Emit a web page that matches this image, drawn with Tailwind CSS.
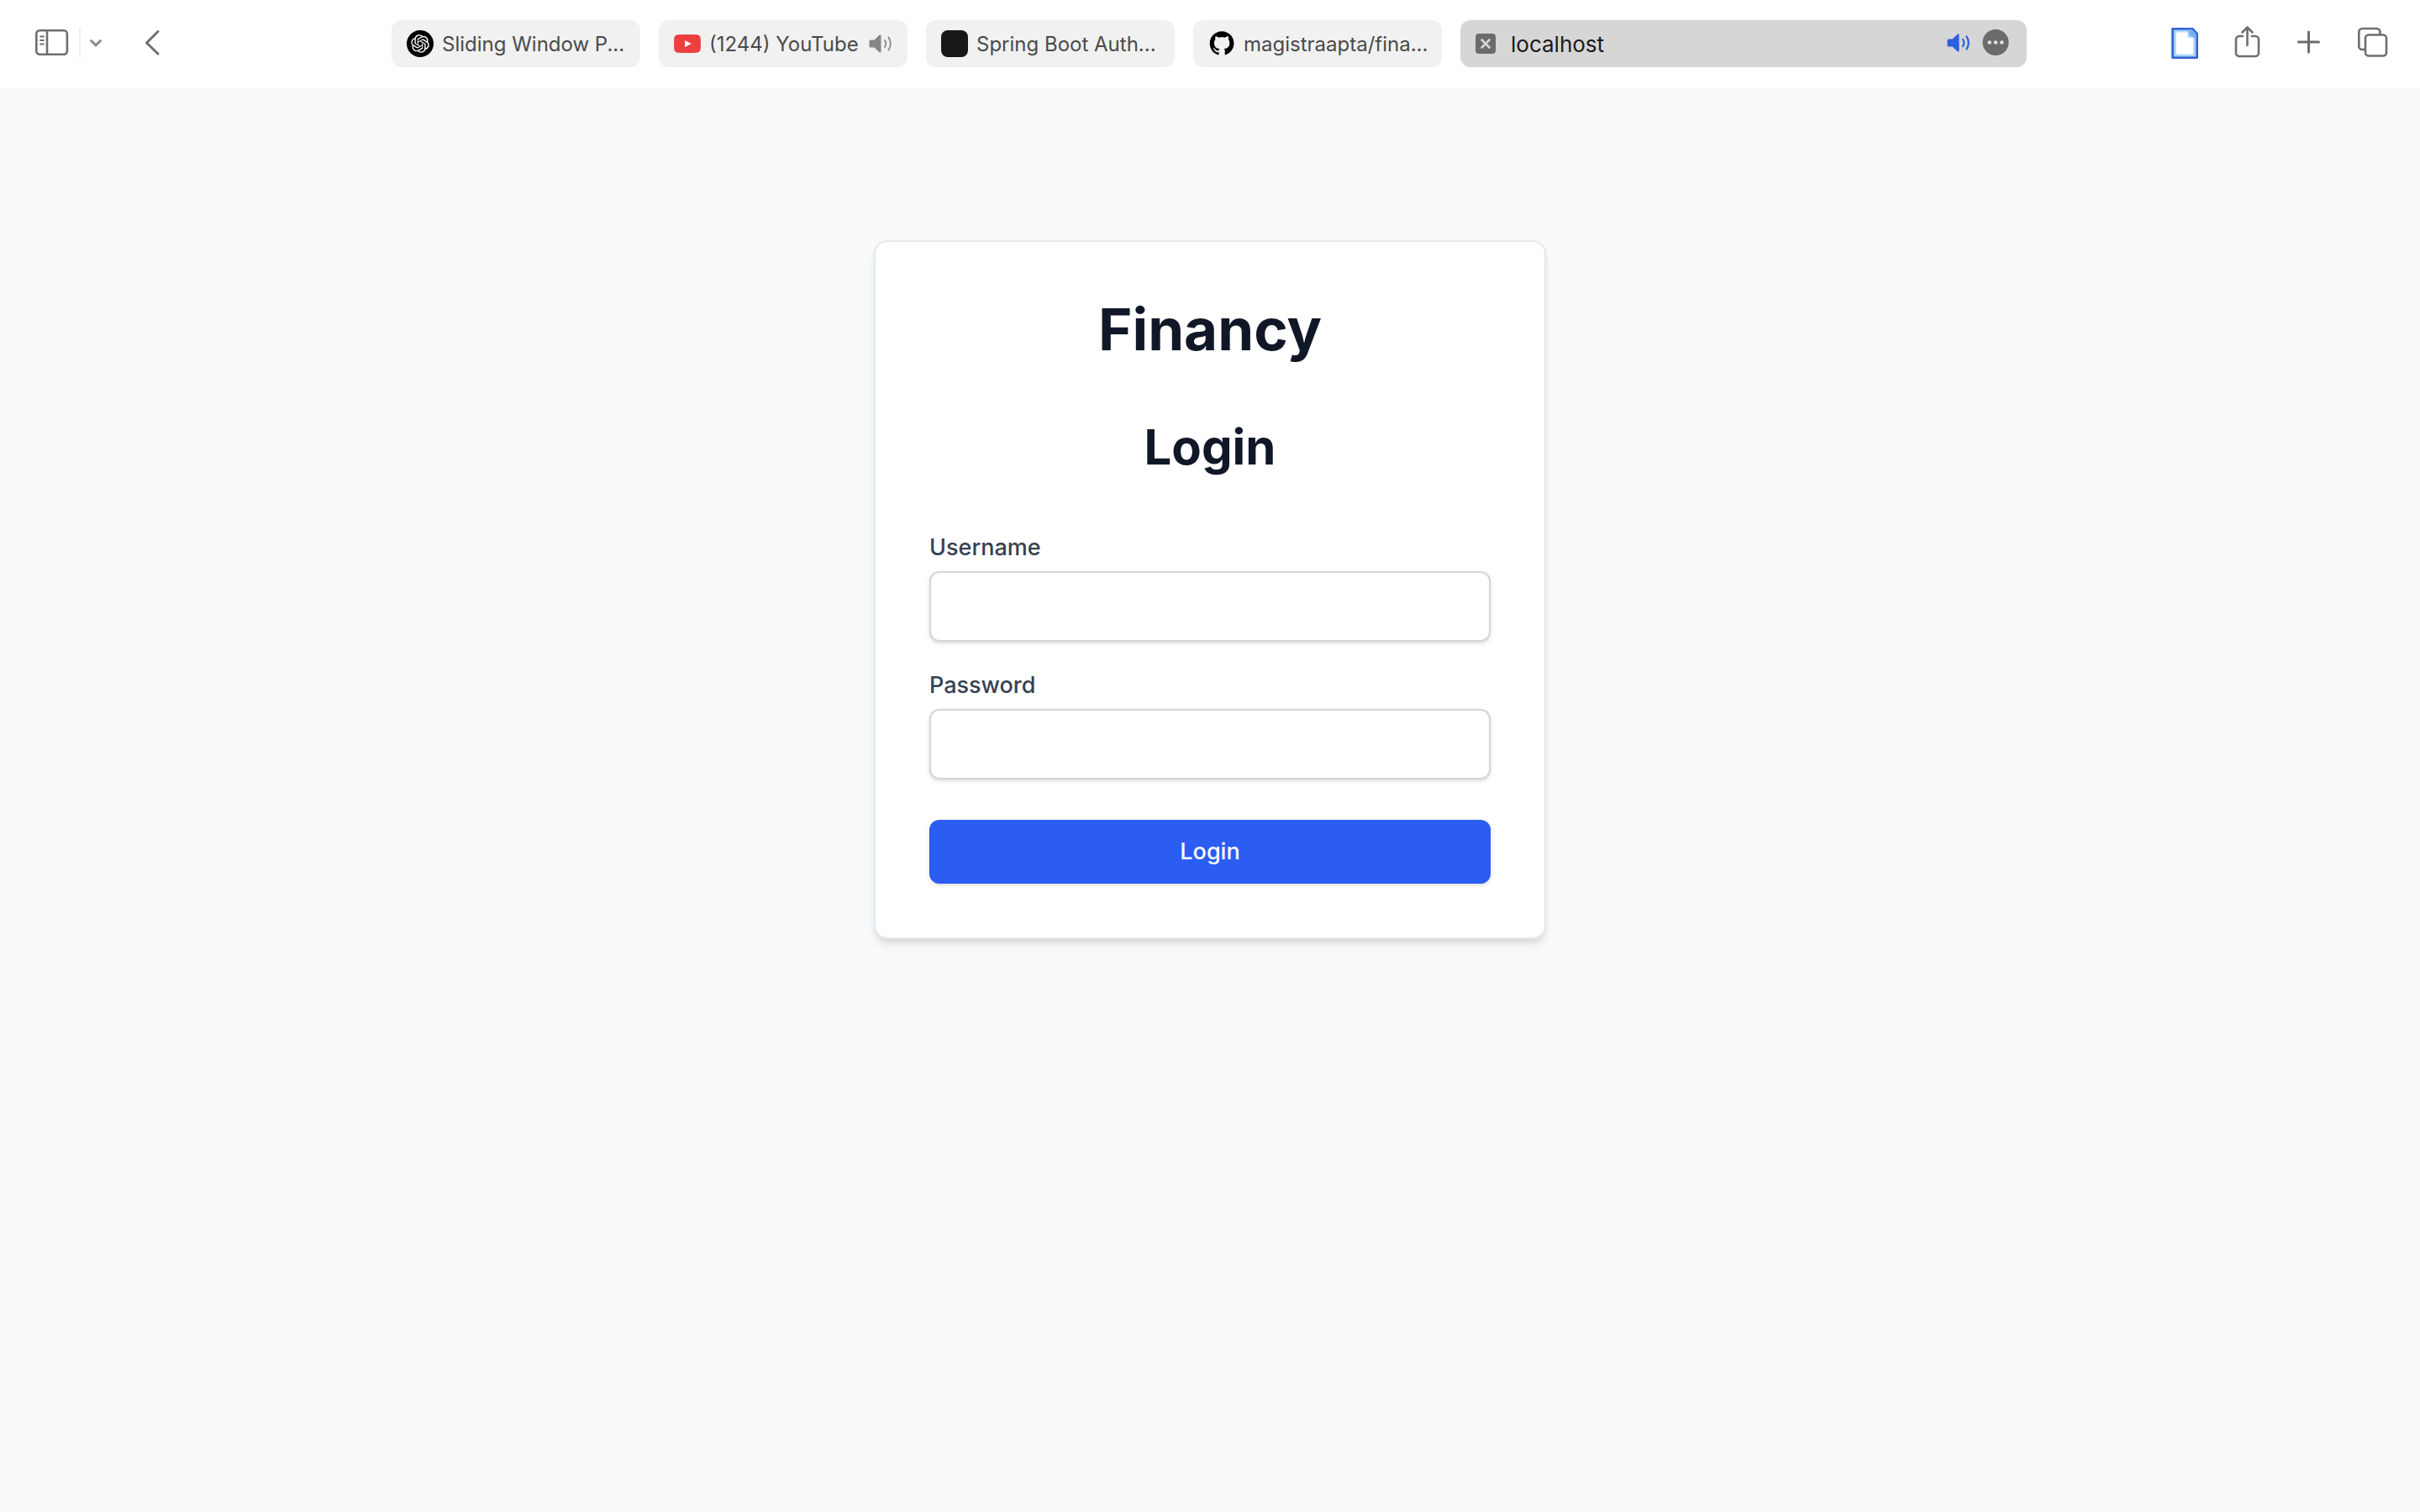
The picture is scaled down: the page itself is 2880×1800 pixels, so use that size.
<!DOCTYPE html>
<html lang="en">
<head>
<meta charset="utf-8">
<meta name="viewport" content="width=device-width, initial-scale=1">
<title>Financy – Login</title>
<script src="https://cdn.jsdelivr.net/npm/@tailwindcss/browser@4"></script>
</head>
<body class="flex min-h-screen flex-col bg-gray-50 font-['Inter',sans-serif]">

<!-- Browser toolbar -->
<header class="flex h-[104px] items-center bg-white text-[#6e6e6e]">
  <div class="flex h-full w-[466px] shrink-0 items-center pb-0.5 pl-[42px]">
    <button type="button" aria-label="Show sidebar">
      <svg class="block h-8 w-10" viewBox="0 0 40 32" fill="none" stroke="currentColor" stroke-linecap="round">
        <rect x="1.300" y="1.300" width="36.600" height="28.400" rx="4" stroke-width="2.600"/>
        <path d="M14 2v27" stroke-width="2.600"/>
        <path d="M6 8.500h4M6 13h4M6 17.500h4" stroke-width="1.800"/>
      </svg>
    </button>
    <div class="ml-3 h-9 w-0.5 bg-[#efefef]"></div>
    <button type="button" aria-label="Tab groups" class="ml-2.5 text-[#8a8a90]">
      <svg class="block h-4 w-4" viewBox="0 0 16 16" fill="none" stroke="currentColor" stroke-width="3" stroke-linecap="round" stroke-linejoin="round"><path d="M2.500 5.500 8 10.800l5.500-5.300"/></svg>
    </button>
    <button type="button" aria-label="Back" class="ml-[50px]">
      <svg class="block h-8 w-5" viewBox="0 0 20 32" fill="none" stroke="currentColor" stroke-width="3" stroke-linecap="round" stroke-linejoin="round"><path d="M16 2.500 2.500 16 16 29"/></svg>
    </button>
  </div>

  <nav aria-label="Open tabs" class="flex min-w-0 flex-1 gap-[22px] text-2xl text-[#4a4a4a]">
    <button type="button" class="flex h-14 w-[296px] items-center gap-2.5 rounded-xl bg-[#f1f1f1] pl-[18px]">
      <svg class="h-8 w-8 shrink-0" viewBox="0 0 32 32">
        <circle cx="16" cy="16" r="16" fill="#000"/>
        <path transform="translate(5.200 5.200) scale(.9)" fill="#fff" d="M22.2819 9.8211a5.9847 5.9847 0 0 0-.5157-4.9108 6.0462 6.0462 0 0 0-6.5098-2.9A6.0651 6.0651 0 0 0 4.9807 4.1818a5.9847 5.9847 0 0 0-3.9977 2.9 6.0462 6.0462 0 0 0 .7427 7.0966 5.98 5.98 0 0 0 .511 4.9107 6.051 6.051 0 0 0 6.5146 2.9001A5.9847 5.9847 0 0 0 13.2599 24a6.0557 6.0557 0 0 0 5.7718-4.2058 5.9894 5.9894 0 0 0 3.9977-2.9001 6.0557 6.0557 0 0 0-.7475-7.073zm-9.022 12.6081a4.4755 4.4755 0 0 1-2.8764-1.0408l.1419-.0804 4.7783-2.7582a.7948.7948 0 0 0 .3927-.6813v-6.7369l2.02 1.1686a.071.071 0 0 1 .038.052v5.5826a4.504 4.504 0 0 1-4.4945 4.4944zm-9.6607-4.1254a4.4708 4.4708 0 0 1-.5346-3.0137l.142.0852 4.783 2.7582a.7712.7712 0 0 0 .7806 0l5.8428-3.3685v2.3324a.0804.0804 0 0 1-.0332.0615L9.74 19.9502a4.4992 4.4992 0 0 1-6.1408-1.6464zM2.3408 7.8956a4.485 4.485 0 0 1 2.3655-1.9728V11.6a.7664.7664 0 0 0 .3879.6765l5.8144 3.3543-2.0201 1.1685a.0757.0757 0 0 1-.071 0l-4.8303-2.7865A4.504 4.504 0 0 1 2.3408 7.872zm16.5963 3.8558L13.1038 8.364 15.1192 7.2a.0757.0757 0 0 1 .071 0l4.8303 2.7913a4.4944 4.4944 0 0 1-.6765 8.1042v-5.6772a.79.79 0 0 0-.407-.667zm2.0107-3.0231l-.142-.0852-4.7735-2.7818a.7759.7759 0 0 0-.7854 0L9.409 9.2297V6.8974a.0662.0662 0 0 1 .0284-.0615l4.8303-2.7866a4.4992 4.4992 0 0 1 6.6802 4.66zM8.3065 12.863l-2.02-1.1638a.0804.0804 0 0 1-.038-.0567V6.0742a4.4992 4.4992 0 0 1 7.3757-3.4537l-.142.0805L8.704 5.459a.7948.7948 0 0 0-.3927.6813zm1.0976-2.3654l2.602-1.4998 2.6069 1.4998v2.9994l-2.5974 1.4997-2.6067-1.4997Z"/>
      </svg>
      <span class="pt-0.5 whitespace-nowrap">Sliding Window P...</span>
    </button>
    <button type="button" class="flex h-14 w-[296px] items-center gap-2.5 rounded-xl bg-[#f1f1f1] px-[18px]">
      <svg class="h-8 w-8 shrink-0" viewBox="0 0 32 32"><path d="M5 5.300Q16 4.700 27 5.300Q31.300 5.500 31.700 9.500Q32.200 16 31.700 22.500Q31.300 26.500 27 26.700Q16 27.300 5 26.700Q.7 26.500.3 22.500Q-.2 16 .3 9.500Q.7 5.500 5 5.300Z" fill="#ec4040"/><path d="M13 12v8.200l7.800-4.100z" fill="#fff"/></svg>
      <span class="pt-0.5 whitespace-nowrap">(1244) YouTube</span>
      <svg class="ml-auto h-6 w-7 shrink-0 text-[#868686]" viewBox="0 0 28 24" role="img" aria-label="Playing audio"><path fill="currentColor" d="M2 7.500h4.500l6-5.800Q14.500.4 14.500 3v18q0 2.600-2 1.300l-6-5.800H2q-1.500 0-1.500-1.500V9Q.5 7.500 2 7.500z"/><path fill="none" stroke="currentColor" stroke-width="1.800" stroke-linecap="round" d="M19 8q2.600 4 0 8M23.500 4.500q4.600 7.500 0 15"/></svg>
    </button>
    <button type="button" class="flex h-14 w-[296px] items-center gap-2.5 rounded-xl bg-[#f1f1f1] pl-[18px]">
      <span class="h-8 w-8 shrink-0 rounded-lg bg-[#171717]"></span>
      <span class="pt-0.5 whitespace-nowrap">Spring Boot Auth...</span>
    </button>
    <button type="button" class="flex h-14 w-[296px] items-center gap-2.5 rounded-xl bg-[#f1f1f1] pl-[18px]">
      <svg class="h-8 w-8 shrink-0" viewBox="0 0 32 32"><path transform="translate(1.700 1.300) scale(1.800)" fill="#000" d="M8 0C3.580 0 0 3.580 0 8c0 3.540 2.290 6.530 5.470 7.590.4.070.55-.17.55-.38 0-.19-.01-.82-.01-1.490-2.010.37-2.530-.49-2.690-.94-.09-.23-.48-.94-.82-1.130-.28-.15-.68-.52-.01-.53.63-.01 1.080.58 1.230.82.72 1.210 1.870.87 2.330.66.07-.52.28-.87.51-1.070-1.780-.2-3.640-.89-3.640-3.950 0-.87.31-1.590.82-2.150-.08-.2-.36-1.020.08-2.120 0 0 .67-.21 2.200.82.64-.18 1.320-.27 2-.27s1.360.09 2 .27c1.530-1.040 2.200-.82 2.200-.82.44 1.100.16 1.920.08 2.120.51.56.82 1.270.82 2.150 0 3.070-1.870 3.750-3.650 3.950.29.25.54.73.54 1.480 0 1.070-.01 1.930-.01 2.200 0 .21.15.46.55.38A8.010 8.010 0 0 0 16 8c0-4.420-3.580-8-8-8z"/></svg>
      <span class="pt-0.5 whitespace-nowrap">magistraapta/fina...</span>
    </button>
    <div class="flex h-14 min-w-0 flex-1 items-center rounded-xl bg-[#d6d6d6] pr-[21px] pl-[18px]">
      <button type="button" aria-label="Close tab" class="shrink-0">
        <svg class="block h-6 w-6" viewBox="0 0 24 24"><rect width="24" height="24" rx="4" fill="#6b6b6b"/><path d="M7.500 7.500l9 9M16.500 7.500l-9 9" stroke="#d6d6d6" stroke-width="2.600" stroke-linecap="round"/></svg>
      </button>
      <input type="text" aria-label="Address" value="localhost" class="ml-[18px] h-10 min-w-0 flex-1 bg-transparent text-[26px] text-[#1a1a1a] outline-none">
      <button type="button" aria-label="Mute tab" class="mr-3.5 shrink-0 pb-0.5 text-[#2a60e0]">
        <svg class="block h-6 w-7" viewBox="0 0 28 24"><path fill="currentColor" d="M2 7.500h4.500l6-5.800Q14.500.4 14.500 3v18q0 2.600-2 1.300l-6-5.800H2q-1.500 0-1.500-1.500V9Q.5 7.500 2 7.500z"/><path fill="none" stroke="currentColor" stroke-width="2.200" stroke-linecap="round" d="M19 8q2.600 4 0 8M23.500 4.500q4.600 7.500 0 15"/></svg>
      </button>
      <button type="button" aria-label="Page menu" class="shrink-0 pb-0.5">
        <svg class="block h-8 w-8" viewBox="0 0 32 32"><circle cx="16" cy="15.500" r="15.500" fill="#6b6b6b"/><g fill="#e0e0e0"><circle cx="8.700" cy="15.500" r="2.300"/><circle cx="16" cy="15.500" r="2.300"/><circle cx="23.300" cy="15.500" r="2.300"/></g></svg>
      </button>
    </div>
  </nav>

  <div class="flex h-full w-[468px] shrink-0 items-center justify-end pr-[38px] pb-1">
    <button type="button" aria-label="Document extension" class="mr-[42px]">
      <svg class="block h-10 w-8" viewBox="0 0 32 40">
        <path d="M1.500 4.300h24l5.300 6V38.700H1.500z" fill="#8fc4fb" stroke="#3465d2" stroke-width="2.600" stroke-linejoin="round"/>
        <path d="M5 7.500h15.500v6.500H27v21.500H5z" fill="#fff" stroke="#b4dcff" stroke-width="2"/>
        <path d="M20 5.600h5l4.500 5v5.400l-4.500-2Q21 13 20 5.600z" fill="#7bb0f2"/>
      </svg>
    </button>
    <button type="button" aria-label="Share" class="mr-11">
      <svg class="block h-10 w-8" viewBox="0 0 32 40" fill="none" stroke="currentColor" stroke-width="2.600" stroke-linecap="round" stroke-linejoin="round"><path d="M11 13H7a4 4 0 0 0-4 4v16a4 4 0 0 0 4 4h19a4 4 0 0 0 4-4V17a4 4 0 0 0-4-4h-4M16.500 24V2.500M10.500 8.500l6-6 6 6"/></svg>
    </button>
    <button type="button" aria-label="New tab" class="mr-11">
      <svg class="block h-8 w-7" viewBox="0 0 28 32" fill="none" stroke="currentColor" stroke-width="3" stroke-linecap="round"><path d="M13.500 4v24M1.500 16h24"/></svg>
    </button>
    <button type="button" aria-label="Tab overview">
      <svg class="block h-9 w-9" viewBox="0 0 36 36" fill="none" stroke="currentColor" stroke-width="2.600" stroke-linejoin="round"><rect x="9" y="9.500" width="25" height="25" rx="4"/><path d="M26.500 9.500V6a4 4 0 0 0-4-4H5.300a4 4 0 0 0-4 4v17a4 4 0 0 0 4 4H9"/></svg>
    </button>
  </div>
</header>

<!-- Sign-in page -->
<main class="flex justify-center px-8 py-[182px]">
  <section class="w-full max-w-[800px] rounded-2xl border-2 border-gray-200 bg-white p-16 shadow-[0_8px_12px_-2px_rgb(0_0_0/0.1),0_4px_8px_-4px_rgb(0_0_0/0.1)]">
    <h1 class="text-center text-[69px] leading-20 font-bold text-gray-900">Financy</h1>
    <h2 class="mt-16 text-center text-[58px] leading-18 font-bold text-gray-900">Login</h2>
    <form class="mt-16">
      <label for="username" class="block text-[27px] leading-10 font-medium text-gray-700">Username</label>
      <input id="username" type="text" class="mt-2 block h-[84px] w-full rounded-xl border-2 border-gray-300 bg-white px-6 text-[28px] shadow-[0_2px_6px_0_rgb(0_0_0/0.1),0_2px_4px_-2px_rgb(0_0_0/0.1)]">
      <label for="password" class="mt-8 block text-[27px] leading-10 font-medium text-gray-700">Password</label>
      <input id="password" type="password" class="mt-2 block h-[84px] w-full rounded-xl border-2 border-gray-300 bg-white px-6 text-[28px] shadow-[0_2px_6px_0_rgb(0_0_0/0.1),0_2px_4px_-2px_rgb(0_0_0/0.1)]">
      <button type="submit" class="mt-12 block h-[76px] w-full rounded-xl bg-[#2b5df3] text-[27px] leading-10 font-medium text-white shadow-[0_2px_6px_0_rgb(0_0_0/0.1),0_2px_4px_-2px_rgb(0_0_0/0.1)]">Login</button>
    </form>
  </section>
</main>
</body>
</html>
